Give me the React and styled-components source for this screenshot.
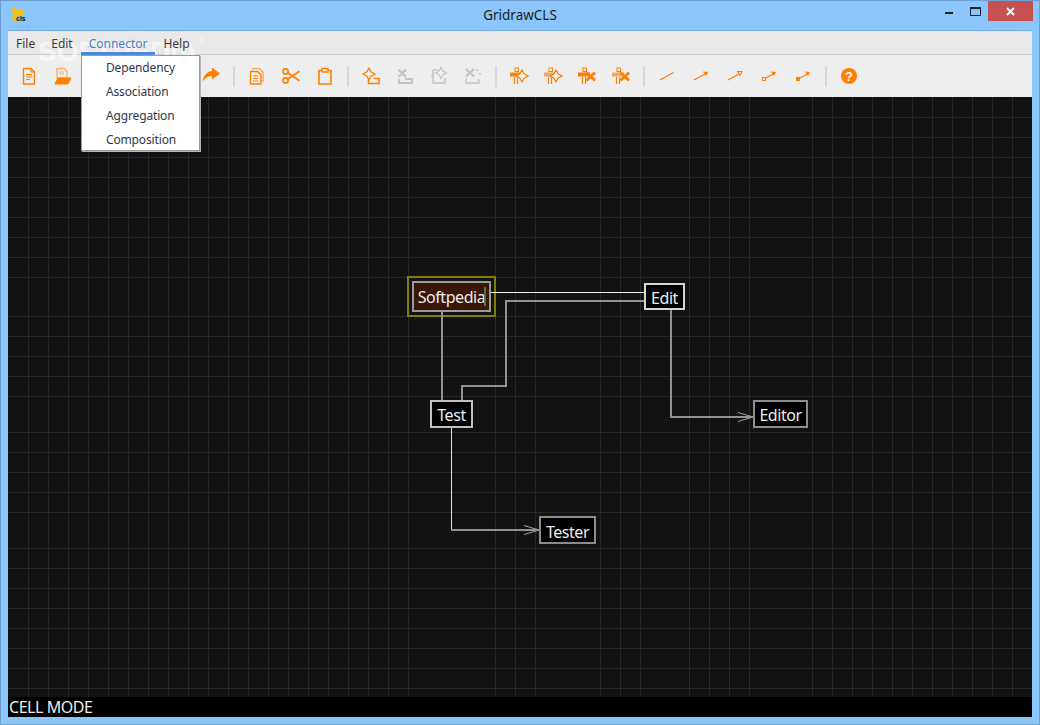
import { Fragment } from 'react';
import styled, { createGlobalStyle } from 'styled-components';

const ORANGE = '#ff8000';
const GRAY = '#c4c4c4';

const GlobalStyle = createGlobalStyle`
  html, body {
    margin: 0;
    padding: 0;
    background: #8ac6fb;
  }
`;

const Win = styled.div`
  position: relative;
  box-sizing: border-box;
  width: 1040px;
  height: 725px;
  display: flex;
  flex-direction: column;
  padding: 0 7px 7px;
  background: #8ac6fb;
  border: 1px solid #6f9fd2;
  overflow: hidden;
  font-family: "Noto Sans", "Open Sans", sans-serif;
`;

const TitleBar = styled.header`
  position: relative;
  flex: none;
  box-sizing: border-box;
  height: 30px;
  padding-bottom: 2px;
  display: flex;
  align-items: center;
  justify-content: center;
  border-bottom: 1px solid #78ace0;
  font-size: 13.5px;
  color: #1c1c1c;
`;

const AppIcon = styled.svg`
  position: absolute;
  left: 2px;
  top: 6px;
`;

const Controls = styled.div`
  position: absolute;
  right: -1px;
  top: 0;
  display: flex;
  align-items: flex-start;
`;

const ControlBtn = styled.div`
  width: ${(p) => p.$w}px;
  height: 20px;
  display: flex;
  align-items: center;
  justify-content: center;
  background: ${(p) => (p.$close ? '#c75050' : 'transparent')};
`;

const Content = styled.div`
  flex: 1;
  min-height: 0;
  display: flex;
  flex-direction: column;
`;

const MenuBar = styled.nav`
  flex: none;
  height: 23px;
  display: flex;
  padding-left: 8px;
  gap: 16px;
  align-items: center;
  background: #e9e9e9;
  border-bottom: 1px solid #cfcfcf;
  font-size: 12px;
  color: #3a3a3a;
`;

const MenuItem = styled.span`
  color: ${(p) => (p.$open ? '#4a7ecb' : '#3a3a3a')};
  position: relative;
  top: 1px;
  z-index: 2;
`;

const OpenBar = styled.div`
  position: absolute;
  left: 80px;
  top: 51px;
  width: 74px;
  height: 3px;
  background: #4a8ad8;
  z-index: 2;
`;

const Toolbar = styled.div`
  flex: none;
  height: 42px;
  display: flex;
  align-items: center;
  padding-left: 4px;
  background: #eeeeee;
`;

const ToolBtn = styled.div`
  flex: none;
  width: 34px;
  height: 24px;
  display: flex;
  align-items: center;
  justify-content: center;
`;

const Sep = styled.div`
  flex: none;
  width: 2px;
  height: 21px;
  margin: 0 5px;
  background: #d8d8d8;
`;

const Watermark = styled.div`
  position: absolute;
  left: 37px;
  top: 35px;
  z-index: 1;
  font-family: "Liberation Sans", Arial, sans-serif;
  font-weight: 700;
  font-size: 28px;
  color: rgba(255, 255, 255, 0.55);
  white-space: nowrap;
  pointer-events: none;
  sup {
    font-size: 9px;
    font-weight: 400;
    vertical-align: 17px;
  }
`;

const Dropdown = styled.div`
  position: absolute;
  left: 80px;
  top: 54px;
  z-index: 3;
  box-sizing: border-box;
  width: 119px;
  height: 96px;
  padding-left: 24px;
  display: flex;
  flex-direction: column;
  background: #fff;
  border: 1px solid #9a9a9a;
  box-shadow: 1px 1px 0 #b5b5b5;
  font-size: 12px;
  letter-spacing: -0.15px;
  color: #2e3a4a;
`;

const DropItem = styled.div`
  height: 24px;
  line-height: 24px;
`;

const Canvas = styled.main`
  position: relative;
  flex: 1;
  min-height: 0;
  background: #121212;
`;

const Drawing = styled.svg`
  position: absolute;
  left: 0;
  top: 0;
`;

const Node = styled.div`
  position: absolute;
  left: ${(p) => p.$x - 8}px;
  top: ${(p) => p.$y - 97}px;
  box-sizing: border-box;
  width: ${(p) => p.$w}px;
  height: ${(p) => p.$h}px;
  padding-top: ${(p) => p.$nudge || 0}px;
  display: flex;
  align-items: center;
  justify-content: center;
  background: ${(p) => p.$bg || '#000'};
  border: 2px solid ${(p) => p.$line};
  color: #ececec;
  font-size: 16px;
  letter-spacing: -0.45px;
  white-space: nowrap;
`;

const Selection = styled.div`
  position: absolute;
  left: 399px;
  top: 179px;
  box-sizing: border-box;
  width: 89px;
  height: 41px;
  border: 2px solid #808000;
`;

const Caret = styled.div`
  position: absolute;
  left: 476px;
  top: 190px;
  width: 2px;
  height: 19px;
  background: #4f7a3a;
`;

const StatusBar = styled.footer`
  flex: none;
  height: 20px;
  line-height: 21px;
  background: #000;
  color: #ececec;
  font-size: 16px;
  letter-spacing: -0.45px;
  padding-left: 1px;
`;

const vLines = [
  ...Array.from({ length: 20 }, (_, i) => 28 + i * 20),
  495, 515, 535, 600, 620, 640, 689, 709, 729, 749,
  ...Array.from({ length: 11 }, (_, i) => 812 + i * 20),
];
const hLines = [
  ...Array.from({ length: 9 }, (_, i) => 117 + i * 20),
  316, 336, 356, 376, 396,
  432, 452, 472, 492, 512,
  ...Array.from({ length: 8 }, (_, i) => 548 + i * 20),
];

function Grid() {
  return (
    <Drawing width="1024" height="600" shapeRendering="crispEdges">
      {vLines.map((x) => (
        <line key={x} x1={x - 8 + 0.5} x2={x - 8 + 0.5} y1="0" y2="600" stroke="#272727" />
      ))}
      {hLines.map((y) => (
        <line key={y} y1={y - 97 + 0.5} y2={y - 97 + 0.5} x1="0" x2="1024" stroke="#272727" />
      ))}
    </Drawing>
  );
}

// page coordinates, shifted by the canvas origin
function Connectors() {
  return (
    <Drawing width="1024" height="600" viewBox="8 97 1024 600" fill="none">
      <path d="M490 292.5H645" stroke="#eeeeee" strokeWidth="1" shapeRendering="crispEdges" />
      <path d="M645 301H505.5V386H462V400" stroke="#929292" strokeWidth="2" shapeRendering="crispEdges" />
      <path d="M442 312V400" stroke="#929292" strokeWidth="2" shapeRendering="crispEdges" />
      <path d="M671 310V417H753" stroke="#929292" strokeWidth="2" shapeRendering="crispEdges" />
      <path d="M738 412.5L753 417L738 421.5" stroke="#929292" strokeWidth="1.3" />
      <path d="M451.5 428V530" stroke="#e6e6e6" strokeWidth="1" shapeRendering="crispEdges" />
      <path d="M451 530H539" stroke="#929292" strokeWidth="2" shapeRendering="crispEdges" />
      <path d="M524 525.5L539 530L524 534.5" stroke="#929292" strokeWidth="1.3" />
    </Drawing>
  );
}

const Ico = ({ children, size = 20 }) => (
  <svg width={size} height={size} viewBox="0 0 20 20" fill="none" stroke={ORANGE} strokeWidth="1.4">
    {children}
  </svg>
);

const Sparkle = ({ x, y, r = 5, color = ORANGE, fill = 'none', sw = 1.2 }) => (
  <path
    d={`M${x} ${y - r}L${x + r * 0.35} ${y - r * 0.35}L${x + r} ${y}L${x + r * 0.35} ${y + r * 0.35}L${x} ${y + r}L${x - r * 0.35} ${y + r * 0.35}L${x - r} ${y}L${x - r * 0.35} ${y - r * 0.35}Z`}
    stroke={color}
    fill={fill}
    strokeWidth={sw}
  />
);

const NewIcon = () => (
  <Ico>
    <path d="M4.5 2.5H12L15.5 6V18H4.5Z" />
    <path d="M12 2.5V6H15.5M7 8.5H13M7 11H13M7 13.5H11" strokeWidth="1.2" />
  </Ico>
);
const OpenIcon = () => (
  <Ico>
    <path d="M4 2.5H11L14 5.5V12H4Z" stroke="#f9b070" />
    <path d="M6 6H11M6 8H11" stroke="#f9b070" strokeWidth="1" />
    <path d="M2 18L5 12H18L15 18Z" fill={ORANGE} stroke={ORANGE} strokeWidth="1" />
  </Ico>
);
const SaveIcon = () => (
  <Ico>
    <path d="M3 3H15L17 5V17H3Z" />
    <path d="M6 3V8H13V3M6 17V11H14V17" />
  </Ico>
);
const UndoIcon = () => (
  <Ico>
    <path d="M10 5.5V2L2 8L10 14V10C13.5 10 15.5 11.5 17 14C17 9.5 14 6 10 5.5Z" fill={ORANGE} stroke="none" />
  </Ico>
);
const RedoIcon = () => (
  <Ico>
    <path d="M11 5V1.5L19 7.5L11 13.5V10C7 10 4 12 1.5 15.5C2.5 9.5 6 5.5 11 5Z" fill={ORANGE} stroke="none" />
  </Ico>
);
const CopyIcon = () => (
  <Ico>
    <path d="M6 4V2.5H12L16 6V15H14" strokeWidth="1.2" stroke="#fa9a3c" />
    <path d="M3.5 5.5H10.5L14 9V18H3.5Z" />
    <path d="M6 10H11M6 12.5H11M6 15H11" strokeWidth="1.1" />
  </Ico>
);
const CutIcon = () => (
  <Ico>
    <circle cx="4.5" cy="5.5" r="2.6" strokeWidth="1.7" />
    <circle cx="4.5" cy="14.5" r="2.6" strokeWidth="1.7" />
    <path d="M6.8 7L18.5 14.8M6.8 13L18.5 5.2" strokeWidth="1.7" />
  </Ico>
);
const PasteIcon = () => (
  <Ico>
    <path d="M6.5 4.5H4V18H16V4.5H13.5" strokeWidth="1.6" />
    <path d="M7 2.5H13V6H7Z" strokeWidth="1.5" />
  </Ico>
);
const AddCell = () => (
  <Ico>
    <path d="M7.5 12V17.5H18V12.5H13" strokeWidth="1.5" />
    <Sparkle x={8} y={8} r={6} />
  </Ico>
);
const CutCell = () => (
  <Ico>
    <path d="M4 13V17H17V13H10" stroke={GRAY} strokeWidth="1.8" />
    <path d="M3.5 3.5L11 11M11 3.5L3.5 11" stroke={GRAY} strokeWidth="2.2" />
  </Ico>
);
const EditCell = () => (
  <Ico>
    <path d="M9 4H4V17H16V12" stroke={GRAY} strokeWidth="1.5" />
    <path d="M2 10H5" stroke={GRAY} strokeWidth="1.5" />
    <Sparkle x={12} y={7} r={5.5} color={GRAY} />
  </Ico>
);
const DropCell = () => (
  <Ico>
    <path d="M3 12V17H16V13" stroke={GRAY} strokeWidth="1.5" />
    <path d="M3 3L11 10.5M11 3L3 10.5" stroke={GRAY} strokeWidth="2.2" />
    <path d="M13 4H15M16 8H18" stroke={GRAY} strokeWidth="1.6" />
  </Ico>
);
const Figure = ({ star, pale }) => (
  <Ico>
    <rect x="6" y="2" width="3.5" height="3.5" strokeWidth="1" />
    <path d="M1 8.5H13" stroke={pale ? '#f9a55a' : ORANGE} strokeWidth="4" />
    <path d="M5.5 11V18M8.5 11V18" strokeWidth="1.2" />
    {star ? (
      <Sparkle x={13} y={10} r={6} fill="#eeeeee" />
    ) : (
      <path d="M9.5 6.5L18 14.5M18 6.5L9.5 14.5" strokeWidth="2.8" />
    )}
  </Ico>
);
const Line = ({ head }) => (
  <Ico>
    <path d="M3 14L16.5 6.5" strokeWidth="1.3" />
    {head === 'arrow' && <path d="M12 5.5L17 6L15 10Z" fill={ORANGE} stroke="none" />}
    {head === 'open' && <path d="M12.5 5.5L17 5.5L15 9.5Z" fill="#eeeeee" strokeWidth="1.1" />}
  </Ico>
);
const LinkDot = ({ filled }) => (
  <Ico>
    <path d="M6 12.5L16 7" strokeWidth="1.3" />
    <path d="M12 5.5L17 6L15 10Z" fill={ORANGE} stroke="none" />
    {filled ? (
      <rect x="3" y="11" width="4" height="4" fill={ORANGE} stroke="none" />
    ) : (
      <rect x="3.5" y="11.5" width="3" height="3" strokeWidth="1.1" />
    )}
  </Ico>
);
const HelpIcon = () => (
  <svg width="18" height="18" viewBox="0 0 18 18">
    <circle cx="9" cy="9" r="8" fill={ORANGE} />
    <text x="9" y="14" textAnchor="middle" fontSize="13" fontWeight="700" fontFamily="Liberation Sans, sans-serif" fill="#fff">?</text>
  </svg>
);

const toolGroups = [
  [<NewIcon />, <OpenIcon />, <SaveIcon />, <SaveIcon />, <UndoIcon />],
  [<RedoIcon />],
  [<CopyIcon />, <CutIcon />, <PasteIcon />],
  [<AddCell />, <CutCell />, <EditCell />, <DropCell />],
  [<Figure star />, <Figure star pale />, <Figure />, <Figure pale />],
  [<Line />, <Line head="arrow" />, <Line head="open" />, <LinkDot />, <LinkDot filled />],
  [<HelpIcon />],
];

function App() {
  return (
    <>
      <GlobalStyle />
      <Win>
        <TitleBar>
          <AppIcon width="18" height="16" viewBox="0 0 18 16">
            <path d="M1 1H5V3H14V8H8V15H3V11H1V8H4V5H1Z" fill="#f4c20d" />
            <text x="6" y="14" fontSize="7" fontWeight="700" fontFamily="Liberation Sans, sans-serif" fill="#111">cls</text>
          </AppIcon>
          GridrawCLS
          <Controls>
            <ControlBtn $w={26}>
              <svg width="8" height="8" viewBox="0 0 8 8"><rect y="5" width="8" height="2" fill="#222" /></svg>
            </ControlBtn>
            <ControlBtn $w={26}>
              <svg width="11" height="9" viewBox="0 0 11 9"><path d="M0.5 1.5H10.5V8.5H0.5Z" fill="none" stroke="#222" /><rect width="11" height="2" fill="#222" /></svg>
            </ControlBtn>
            <ControlBtn $w={45} $close>
              <svg width="9" height="9" viewBox="0 0 9 9"><path d="M1 1L8 8M8 1L1 8" stroke="#fff" strokeWidth="2" /></svg>
            </ControlBtn>
          </Controls>
        </TitleBar>
        <Content>
          <MenuBar>
            <MenuItem>File</MenuItem>
            <MenuItem>Edit</MenuItem>
            <MenuItem $open>Connector</MenuItem>
            <MenuItem>Help</MenuItem>
          </MenuBar>
          <Toolbar>
            {toolGroups.map((group, i) => (
              <Fragment key={i}>
                {i > 0 && <Sep />}
                {group.map((icon, j) => (
                  <ToolBtn key={j}>{icon}</ToolBtn>
                ))}
              </Fragment>
            ))}
          </Toolbar>
          <Canvas>
            <Grid />
            <Selection />
            <Connectors />
            <Node $x={412} $y={281} $w={79} $h={31} $line="#9a9a9a" $bg="#3a1606">Softpedia</Node>
            <Caret />
            <Node $x={644} $y={283} $w={41} $h={27} $line="#d4d4d4" $nudge={2}>Edit</Node>
            <Node $x={430} $y={400} $w={43} $h={28} $line="#c0c0c0" $nudge={2}>Test</Node>
            <Node $x={753} $y={400} $w={55} $h={28} $line="#8c8c8c" $nudge={2}>Editor</Node>
            <Node $x={539} $y={516} $w={57} $h={28} $line="#8c8c8c" $nudge={3}>Tester</Node>
          </Canvas>
          <StatusBar>CELL MODE</StatusBar>
        </Content>
        <Watermark>SOFTPEDIA<sup>®</sup></Watermark>
        <OpenBar />
        <Dropdown>
          <DropItem>Dependency</DropItem>
          <DropItem>Association</DropItem>
          <DropItem>Aggregation</DropItem>
          <DropItem>Composition</DropItem>
        </Dropdown>
      </Win>
    </>
  );
}

export default App;
